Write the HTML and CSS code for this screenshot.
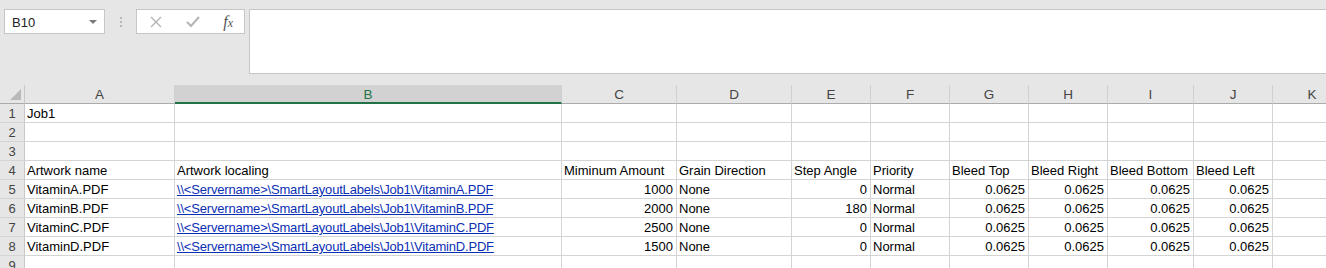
FILE: index.html
```html
<!DOCTYPE html>
<html lang="en">
  <head>
    <meta charset="UTF-8" />
    <title>Book1 - Excel</title>
    <link rel="stylesheet" href="styles.css">
  </head>
  <body>
    <div class="formula-area">
      <div class="name-box">
        <span>B10</span>
        <span class="arrow"></span>
      </div>
      <div class="grip">
        <span></span><span></span><span></span>
      </div>
      <div class="fx-buttons">
        <svg width="12" height="12" viewBox="0 0 12 12"><path d="M1 1 L11 11 M11 1 L1 11" stroke="#b4b4b4" stroke-width="1.4" fill="none"/></svg>
        <svg width="14" height="12" viewBox="0 0 14 12"><path d="M1 6 L5 10 L13 1" stroke="#b4b4b4" stroke-width="2" fill="none"/></svg>
        <span class="fx">f<sub>x</sub></span>
      </div>
      <div class="formula-input"></div>
    </div>

    <div class="sheet">
      <div class="corner"><span></span></div>
      <div class="col-head">A</div>
      <div class="col-head selected">B</div>
      <div class="col-head">C</div>
      <div class="col-head">D</div>
      <div class="col-head">E</div>
      <div class="col-head">F</div>
      <div class="col-head">G</div>
      <div class="col-head">H</div>
      <div class="col-head">I</div>
      <div class="col-head">J</div>
      <div class="col-head">K</div>

      <div class="row-head">1</div>
      <div class="cell">Job1</div>
      <div class="cell"></div><div class="cell"></div><div class="cell"></div><div class="cell"></div><div class="cell"></div><div class="cell"></div><div class="cell"></div><div class="cell"></div><div class="cell"></div><div class="cell"></div>

      <div class="row-head">2</div>
      <div class="cell"></div><div class="cell"></div><div class="cell"></div><div class="cell"></div><div class="cell"></div><div class="cell"></div><div class="cell"></div><div class="cell"></div><div class="cell"></div><div class="cell"></div><div class="cell"></div>

      <div class="row-head">3</div>
      <div class="cell"></div><div class="cell"></div><div class="cell"></div><div class="cell"></div><div class="cell"></div><div class="cell"></div><div class="cell"></div><div class="cell"></div><div class="cell"></div><div class="cell"></div><div class="cell"></div>

      <div class="row-head">4</div>
      <div class="cell">Artwork name</div>
      <div class="cell">Artwork localing</div>
      <div class="cell">Miminum Amount</div>
      <div class="cell">Grain Direction</div>
      <div class="cell">Step Angle</div>
      <div class="cell">Priority</div>
      <div class="cell">Bleed Top</div>
      <div class="cell">Bleed Right</div>
      <div class="cell">Bleed Bottom</div>
      <div class="cell">Bleed Left</div>
      <div class="cell"></div>

      <div class="row-head">5</div>
      <div class="cell">VitaminA.PDF</div>
      <div class="cell"><a href="#">\\&lt;Servername&gt;\SmartLayoutLabels\Job1\VitaminA.PDF</a></div>
      <div class="cell num">1000</div>
      <div class="cell">None</div>
      <div class="cell num">0</div>
      <div class="cell">Normal</div>
      <div class="cell num">0.0625</div>
      <div class="cell num">0.0625</div>
      <div class="cell num">0.0625</div>
      <div class="cell num">0.0625</div>
      <div class="cell"></div>

      <div class="row-head">6</div>
      <div class="cell">VitaminB.PDF</div>
      <div class="cell"><a href="#">\\&lt;Servername&gt;\SmartLayoutLabels\Job1\VitaminB.PDF</a></div>
      <div class="cell num">2000</div>
      <div class="cell">None</div>
      <div class="cell num">180</div>
      <div class="cell">Normal</div>
      <div class="cell num">0.0625</div>
      <div class="cell num">0.0625</div>
      <div class="cell num">0.0625</div>
      <div class="cell num">0.0625</div>
      <div class="cell"></div>

      <div class="row-head">7</div>
      <div class="cell">VitaminC.PDF</div>
      <div class="cell"><a href="#">\\&lt;Servername&gt;\SmartLayoutLabels\Job1\VitaminC.PDF</a></div>
      <div class="cell num">2500</div>
      <div class="cell">None</div>
      <div class="cell num">0</div>
      <div class="cell">Normal</div>
      <div class="cell num">0.0625</div>
      <div class="cell num">0.0625</div>
      <div class="cell num">0.0625</div>
      <div class="cell num">0.0625</div>
      <div class="cell"></div>

      <div class="row-head">8</div>
      <div class="cell">VitaminD.PDF</div>
      <div class="cell"><a href="#">\\&lt;Servername&gt;\SmartLayoutLabels\Job1\VitaminD.PDF</a></div>
      <div class="cell num">1500</div>
      <div class="cell">None</div>
      <div class="cell num">0</div>
      <div class="cell">Normal</div>
      <div class="cell num">0.0625</div>
      <div class="cell num">0.0625</div>
      <div class="cell num">0.0625</div>
      <div class="cell num">0.0625</div>
      <div class="cell"></div>

      <div class="row-head">9</div>
      <div class="cell"></div><div class="cell"></div><div class="cell"></div><div class="cell"></div><div class="cell"></div><div class="cell"></div><div class="cell"></div><div class="cell"></div><div class="cell"></div><div class="cell"></div><div class="cell"></div>
    </div>
  </body>
</html>
```

FILE: styles.css
```css
html, body {
  margin: 0;
  overflow: hidden;
}

body {
  font-family: "Liberation Sans", Arial, sans-serif;
  font-size: 13px;
  background-color: #fff;
  width: 1326px;
}

/* formula bar */

.formula-area {
  height: 85px;
  box-sizing: border-box;
  background-color: #e6e6e6;
  padding: 9px 0 0 4px;
  display: flex;
  align-items: flex-start;
}

.name-box {
  width: 101px;
  height: 25px;
  box-sizing: border-box;
  background-color: #fff;
  border: 1px solid #c6c6c6;
  display: flex;
  align-items: center;
  justify-content: space-between;
  padding: 1px 7px 0 7px;
  color: #222;
}

.name-box .arrow {
  width: 0;
  height: 0;
  border-left: 4px solid transparent;
  border-right: 4px solid transparent;
  border-top: 4px solid #7a7a7a;
}

.grip {
  width: 31px;
  height: 25px;
  display: flex;
  flex-flow: column;
  align-items: center;
  justify-content: center;
  gap: 2px;
}

.grip span {
  width: 2px;
  height: 2px;
  background-color: #b9b9b9;
}

.fx-buttons {
  width: 109px;
  height: 25px;
  box-sizing: border-box;
  background-color: #fff;
  border: 1px solid #c6c6c6;
  display: flex;
  align-items: center;
  justify-content: space-between;
  padding: 0 11px 0 13px;
}

.fx {
  font-family: "Liberation Serif", serif;
  font-style: italic;
  font-size: 16px;
  color: #555;
}

.fx sub {
  font-size: 12px;
  vertical-align: 0;
}

.formula-input {
  flex: 1;
  margin-left: 4px;
  height: 65px;
  box-sizing: border-box;
  background-color: #fff;
  border: 1px solid #c6c6c6;
  border-right: none;
}

/* grid */

.sheet {
  display: grid;
  grid-template-columns: 25px 150px 387px 115px 115px 79px 79px 79px 79px 86px 79px 79px;
  grid-auto-rows: 19px;
  width: 1352px;
}

.sheet > div {
  box-sizing: border-box;
  border-right: 1px solid #d4d4d4;
  border-bottom: 1px solid #d4d4d4;
  white-space: nowrap;
  overflow: hidden;
  line-height: 18px;
  padding-top: 1px;
}

.sheet > .corner {
  background-color: #e6e6e6;
  border-right: 1px solid #c8c8c8;
  border-bottom: 1px solid #ababab;
  position: relative;
}

.corner span {
  position: absolute;
  right: 3px;
  bottom: 3px;
  width: 0;
  height: 0;
  border-left: 11px solid transparent;
  border-bottom: 11px solid #b9b9b9;
}

.sheet > .col-head {
  background-color: #e6e6e6;
  color: #444;
  font-size: 13.5px;
  text-align: center;
  border-right: 1px solid #d0d0d0;
  border-bottom: 1px solid #ababab;
}

.sheet > .col-head.selected {
  background-color: #d2d2d2;
  color: #217346;
  border-bottom: 2px solid #217346;
  line-height: 17px;
}

.sheet > .row-head {
  background-color: #e6e6e6;
  color: #444;
  text-align: center;
  border-right: 1px solid #c8c8c8;
  border-bottom: 1px solid #d4d4d4;
}

.cell {
  color: #000;
  padding-left: 2px;
}

.cell.num {
  text-align: right;
  padding-right: 3px;
}

.cell a {
  color: #0b2fb5;
  text-decoration: underline;
  letter-spacing: -0.19px;
}
```
